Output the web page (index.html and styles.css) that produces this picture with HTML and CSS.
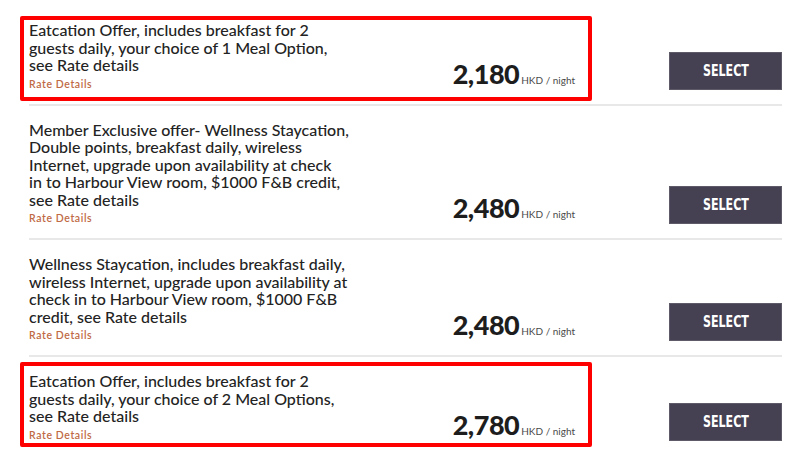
FILE: index.html
```html
<!DOCTYPE html>
<html lang="en">
<head>
<meta charset="utf-8">
<title>Rates</title>
<link rel="stylesheet" href="styles.css">
</head>
<body>
<div class="rates">
  <div class="rate">
    <div class="mark mark-top"></div>
    <div class="info">
      <div class="desc">
        <p class="title">Eatcation Offer, includes breakfast for 2<br>guests daily, your choice of 1 Meal Option,<br>see Rate details</p>
        <a class="details">Rate Details</a>
      </div>
      <div class="price"><span class="amount">2,180</span><span class="unit">HKD / night</span></div>
    </div>
    <button class="select"><span class="select-label">SELECT</span></button>
  </div>
  <div class="rate">
    <div class="info">
      <div class="desc">
        <p class="title">Member Exclusive offer- Wellness Staycation,<br>Double points, breakfast daily, wireless<br>Internet, upgrade upon availability at check<br>in to Harbour View room, $1000 F&amp;B credit,<br>see Rate details</p>
        <a class="details">Rate Details</a>
      </div>
      <div class="price"><span class="amount">2,480</span><span class="unit">HKD / night</span></div>
    </div>
    <button class="select"><span class="select-label">SELECT</span></button>
  </div>
  <div class="rate">
    <div class="info">
      <div class="desc">
        <p class="title">Wellness Staycation, includes breakfast daily,<br>wireless Internet, upgrade upon availability at<br>check in to Harbour View room, $1000 F&amp;B<br>credit, see Rate details</p>
        <a class="details">Rate Details</a>
      </div>
      <div class="price"><span class="amount">2,480</span><span class="unit">HKD / night</span></div>
    </div>
    <button class="select"><span class="select-label">SELECT</span></button>
  </div>
  <div class="rate">
    <div class="mark mark-bottom"></div>
    <div class="info">
      <div class="desc">
        <p class="title">Eatcation Offer, includes breakfast for 2<br>guests daily, your choice of 2 Meal Options,<br>see Rate details</p>
        <a class="details">Rate Details</a>
      </div>
      <div class="price"><span class="amount">2,780</span><span class="unit">HKD / night</span></div>
    </div>
    <button class="select"><span class="select-label">SELECT</span></button>
  </div>
</div>
</body>
</html>
```
FILE: styles.css
```css
html, body {
  margin: 0;
  padding: 0;
  background: #ffffff;
}

body {
  font-family: "Lato", "Open Sans", sans-serif;
  color: #2a2a2a;
}

.rates {
  margin-left: 29px;
  width: 753px;
  padding-top: 6px;
}

.rate {
  position: relative;
  display: flex;
  align-items: flex-end;
  padding: 15px 0 14px;
  border-bottom: 2px solid #e8e8e8;
}

.rate:last-child {
  border-bottom: none;
}

.info {
  display: flex;
  align-items: flex-end;
  width: 546px;
}

.desc {
  display: flex;
  flex-direction: column;
}

.title {
  margin: 0;
  font-size: 16px;
  line-height: 17.5px;
  font-weight: 500;
  color: #232323;
}

.details {
  margin-top: 4px;
  font-size: 10.5px;
  line-height: 12px;
  font-weight: 600;
  color: #c06a45;
  letter-spacing: 0.6px;
}

.price {
  margin-left: auto;
  display: flex;
  align-items: baseline;
  margin-bottom: 4px;
}

.amount {
  font-size: 27px;
  line-height: 24px;
  font-weight: 900;
  color: #1d1d1d;
  letter-spacing: -0.5px;
}

.unit {
  margin-left: 2px;
  font-size: 10px;
  color: #4a4a4a;
}

.select {
  margin-left: auto;
  width: 113px;
  height: 38px;
  background: #454052;
  border: 1px solid #5e5a68;
  color: #ffffff;
  padding: 0;
}

.select-label {
  display: inline-block;
  font-family: "DejaVu Sans Condensed", "DejaVu Sans", sans-serif;
  font-stretch: condensed;
  font-weight: 700;
  font-size: 15px;
  transform: scaleX(0.82);
}

.mark {
  position: absolute;
  left: -9px;
  width: 572px;
  border: 4px solid #ff0000;
  border-radius: 2px;
  box-sizing: border-box;
  pointer-events: none;
}

.mark-top {
  top: 10px;
  height: 85px;
}

.mark-bottom {
  top: 5px;
  height: 85px;
}
```
